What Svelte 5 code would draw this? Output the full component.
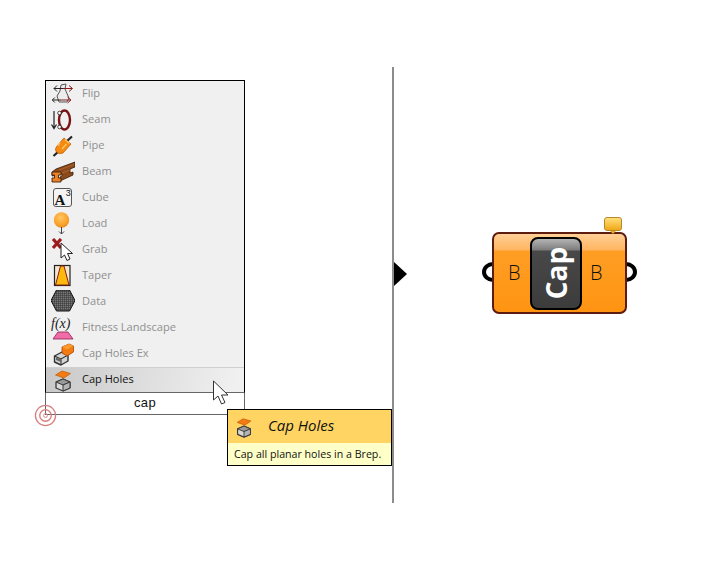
<script>
  const rows = ['Flip','Seam','Pipe','Beam','Cube','Load','Grab','Taper','Data','Fitness Landscape','Cap Holes Ex'];
</script>

{#snippet capIcon()}
  <svg class="ico" viewBox="0 0 24 24" aria-hidden="true">
    <path d="M5 14 L12 11 L19 14 V20 L12 23 L5 20 Z" fill="#d8d8d8" stroke="#3a3a3a" stroke-width="1.300" stroke-linejoin="round"/>
    <path d="M5 14 L12 11 L19 14 L12 17 Z" fill="#9a9a9a" stroke="#3a3a3a" stroke-width="1"/>
    <path d="M12 17 L19 14 V20 L12 23 Z" fill="#b4b4b4" stroke="#3a3a3a" stroke-width="1"/>
    <path d="M4.500 7 L11 3 L19.500 5.500 L13 10 Z" fill="#f47a12" stroke="#c2600c" stroke-width=".8" stroke-linejoin="round"/>
  </svg>
{/snippet}

{#snippet icon(name)}
  {#if name === 'Flip'}
    <svg class="ico" viewBox="0 0 24 24"><path d="M10 3 L15 2 L14 7 L18 16 L16 20 H8 L6 14 L9 9 Z" fill="#ececec" stroke="#555" stroke-width="1"/><path d="M3 6.500 H12" stroke="#222" stroke-width="1"/><path d="M12 6.500 H21" stroke="#8a1c1c" stroke-width="1"/><path d="M1.500 18 H10" stroke="#222" stroke-width="1"/><path d="M10 18 H19.500" stroke="#8a1c1c" stroke-width="1"/><path d="M6 3.500 L3 6.500 L6 9.500 M3.800 15.500 L1.300 18 L3.800 20.500" fill="none" stroke="#222" stroke-width="1"/><path d="M18 3.500 L21.500 6.500 L18 9.500 M16.500 15 L20 18 L16.500 21" fill="none" stroke="#8a1c1c" stroke-width="1"/></svg>
  {:else if name === 'Seam'}
    <svg class="ico" viewBox="0 0 24 24"><ellipse cx="13.500" cy="12" rx="5.500" ry="9.500" fill="none" stroke="#7a1414" stroke-width="2.400"/><path d="M3 3 V20 M.5 16.500 L3 20.500 L5.500 16.500" fill="none" stroke="#222" stroke-width="1.200"/><circle cx="8.500" cy="5" r="1.800" fill="#fff" stroke="#222" stroke-width=".8"/><circle cx="8.500" cy="19" r="1.800" fill="#fff" stroke="#222" stroke-width=".8"/></svg>
  {:else if name === 'Pipe'}
    <svg class="ico" viewBox="0 0 24 24"><path d="M21 2.500 L16 7 M8 17 L2.500 22" stroke="#222" stroke-width="2.200"/><path d="M13 4 L20 10 L12 19 Q8 21 5 17.500 Q3.500 15 6 12 Z" fill="#f58a12" stroke="#c06208" stroke-width=".8"/><path d="M14 5.500 L18.500 9.500 M7 12 L9 8.500 M11 15 L15.500 10" stroke="#ffc463" stroke-width="1.400"/></svg>
  {:else if name === 'Beam'}
    <svg class="ico" viewBox="0 0 24 24"><path d="M1 12 L5 9 L24 2 V7 L19 9 V13 L22 12 V15 L9 21 V17 L11 16 V14 L1 16 Z" fill="#8a4a1c" stroke="#3a1c08" stroke-width=".8"/><path d="M1 12 H10 V15 H7.500 V18 H10 V22 H1 V18 H3.500 V15 H1 Z" fill="#e8832a" stroke="#4a2208" stroke-width=".9"/><path d="M8 10 L23 4.500 M11 13 L20 9.500" stroke="#b86a2c" stroke-width=".8"/></svg>
  {:else if name === 'Cube'}
    <svg class="ico" viewBox="0 0 24 24"><rect x="2.500" y="2.500" width="18" height="18" rx="2.500" fill="#f3f3f3" stroke="#555" stroke-width="1"/><text x="3.500" y="18.500" class="cube-a">A</text><text x="14.800" y="10" class="cube-n">3</text></svg>
  {:else if name === 'Load'}
    <svg class="ico" viewBox="0 0 24 24"><defs><radialGradient id="lg" cx=".45" cy=".35" r=".8"><stop offset="0" stop-color="#ffc766"/><stop offset=".6" stop-color="#f9a128"/><stop offset="1" stop-color="#d87a0c"/></radialGradient></defs><circle cx="10.500" cy="8" r="7.700" fill="url(#lg)"/><path d="M10.500 15 V22 M8 19.500 L10.500 22 L13 19.500" fill="none" stroke="#444" stroke-width="1"/></svg>
  {:else if name === 'Grab'}
    <svg class="ico" viewBox="0 0 24 24"><path d="M2 1 L10 10 M10 1 L2 10" stroke="#9c1c1c" stroke-width="3.200"/><path d="M10 5 V20 L13.500 17 L16 22.500 L19 21 L16.500 15.500 L21.500 15.500 Z" fill="#fff" stroke="#222" stroke-width="1"/></svg>
  {:else if name === 'Taper'}
    <svg class="ico" viewBox="0 0 24 24"><rect x="3.500" y="1.500" width="15.500" height="20" fill="#f4e6d0" stroke="#222" stroke-width="1.200"/><path d="M9.500 2 H13 L18 21 H4.500 Z" fill="#fdb90e" stroke="#8a1c10" stroke-width="1"/></svg>
  {:else if name === 'Data'}
    <svg class="ico" viewBox="0 0 24 24"><defs><pattern id="dp" width="2" height="2" patternUnits="userSpaceOnUse"><rect width="2" height="2" fill="#555"/><rect width="1" height="1" fill="#777"/><rect x="1" y="1" width="1" height="1" fill="#444"/></pattern></defs><path d="M5.500 0 H18.500 L24 10.500 L18.500 21 H5.500 L0 10.500 Z" fill="url(#dp)" stroke="#111" stroke-width="1"/></svg>
  {:else if name === 'Fitness Landscape'}
    <svg class="ico" viewBox="0 0 24 24"><text x="0" y="12" class="fx">f(x)</text><path d="M7 16 H17 L22 23 H2 Z" fill="#f26ca7" stroke="#8a2050" stroke-width=".8"/></svg>
  {:else}
    <svg class="ico" viewBox="0 0 24 24"><path d="M3.500 14 L11 10 L17 13 V19 L10 23 L3.500 20 Z" fill="#d4d4d4" stroke="#333" stroke-width="1.400" stroke-linejoin="round"/><path d="M3.500 14 L10 17 L17 13 M10 17 V23" fill="none" stroke="#333" stroke-width="1.100"/><path d="M5 15.500 L10 17.500 L10 20 L5 18 Z" fill="#666"/><path d="M11 5 L18 2 L22.500 4 V10 L16 14 L11 11 Z" fill="#f47a12" stroke="#a8480a" stroke-width=".8"/><path d="M11 5 L16 7.500 L22.500 4 L18 2 Z" fill="#ff9a30"/></svg>
  {/if}
{/snippet}

<div class="stage">
  <div class="divider"></div>
  <div class="arrow"></div>

  <div class="panel">
    <ul class="list">
      {#each rows as r}
        <li class="row">{@render icon(r)}<span>{r}</span></li>
      {/each}
      <li class="row active">{@render capIcon()}<span>Cap Holes</span></li>
    </ul>
    <div class="search">cap</div>
  </div>

  <svg class="target" viewBox="0 0 24 24"><circle cx="12" cy="12" r="10.500" fill="none" stroke="#d98080" stroke-width="1.400"/><circle cx="12" cy="12" r="6" fill="none" stroke="#d98080" stroke-width="1.400"/><circle cx="12" cy="12" r="2" fill="none" stroke="#d98080" stroke-width="1"/></svg>

  <svg class="cursor" viewBox="0 0 20 26"><path d="M1.500 1 V20 L6 16 L9.500 24 L13 22.500 L9.500 15 L16 15 Z" fill="#fff" stroke="#333" stroke-width="1"/></svg>

  <div class="tip">
    <div class="tip-head">{@render capIcon()}<em>Cap Holes</em></div>
    <div class="tip-body">Cap all planar holes in a Brep.</div>
  </div>

  <div class="comp">
    <div class="wire left"></div>
    <div class="wire right"></div>
    <div class="body">
      <span class="port">B</span>
      <div class="nick"><span>Cap</span></div>
      <span class="port">B</span>
    </div>
    <div class="bubble"></div>
  </div>
</div>

<style>
  :global(body) { background: #fff; }
  .stage { position: relative; width: 712px; height: 564px; overflow: hidden; font-family: "Liberation Sans", Arial, sans-serif; }
  .divider { position: absolute; left: 392px; top: 67px; width: 2px; height: 436px; background: #8c8c8c; }
  .arrow { position: absolute; left: 394px; top: 262px; width: 0; height: 0; border-top: 12.500px solid transparent; border-bottom: 12.500px solid transparent; border-left: 13px solid #000; }

  .panel { position: absolute; left: 45px; top: 80px; width: 200px; box-sizing: border-box; }
  .list { list-style: none; margin: 0; padding: 0; border: 1px solid #000; border-bottom: 1px solid #666; background: #f0f0f0; }
  .row { display: flex; align-items: center; gap: 7px; height: 26px; padding-left: 5px; font-family: "Open Sans", "Liberation Sans", sans-serif; font-size: 11.050px; color: #8f8f8f; }
  .row span { line-height: 1; position: relative; top: -1px; }
  .active { color: #111; height: 25px; box-sizing: border-box; background: linear-gradient(100deg, #c8c8c8, #dedede 50%, #f0f0f0 95%); border-top: 1px solid #cfcfcf; }
  .ico { width: 24px; height: 24px; flex: none; }
  .cube-a { font: 700 15px "Liberation Serif", serif; fill: #111; }
  .cube-n { font: 400 9px "Liberation Sans", sans-serif; fill: #111; }
  .fx { font: italic 400 14px "Liberation Serif", serif; fill: #222; }
  .search { height: 21px; background: #fff; border: 1px solid #666; border-top: 0; text-align: center; font-size: 13px; line-height: 20px; color: #111; letter-spacing: .3px; }

  .target { position: absolute; left: 34px; top: 404px; width: 23px; height: 23px; }
  .cursor { position: absolute; left: 212px; top: 380px; width: 20px; height: 26px; }

  .tip { position: absolute; left: 227px; top: 409px; width: 165px; box-sizing: border-box; border: 1px solid #000; font-family: "Open Sans", "Liberation Sans", sans-serif; }
  .tip-head { height: 33px; display: flex; align-items: center; gap: 13px; padding-left: 5px; background: #ffd463; }
  .tip-head em { font-size: 15px; color: #111; position: relative; top: -2px; }
  .tip-head .ico { width: 22px; height: 22px; }
  .tip-body { height: 22px; padding-left: 6px; background: #ffffc8; font: 10.650px/22px "Open Sans", "Liberation Sans", sans-serif; color: #111; white-space: nowrap; }

  .comp { position: absolute; left: 482px; top: 216px; width: 156px; height: 100px; }
  .wire { position: absolute; top: 46px; width: 22px; height: 20px; border: 4px solid #000; border-radius: 50%; box-sizing: border-box; }
  .wire.left { left: 0; }
  .wire.right { left: 133px; }
  .bubble { position: absolute; left: 122px; top: 1px; width: 18px; height: 14px; border-radius: 3px; background: linear-gradient(#ffdf7a, #f0a818); border: 1px solid #b8892a; box-sizing: border-box; }
  .bubble::after { content: ""; position: absolute; left: 5px; bottom: -4px; border-left: 3px solid transparent; border-right: 3px solid transparent; border-top: 3px solid #e8a820; }
  .body { position: absolute; left: 10px; top: 16px; width: 135px; height: 82px; box-sizing: border-box; border: 2px solid #5c1c10; border-radius: 7px; background: linear-gradient(#ffcf96 0, #ffb560 16px, #ff9e24 17px, #ff9412 100%); display: flex; align-items: center; padding-left: 14px; }
  .port { font: 300 20px "Open Sans", "Liberation Sans", sans-serif; color: #111; width: 12px; position: relative; top: -1px; }
  .nick { width: 52px; height: 73px; margin: 0 8px 0 10px; box-sizing: border-box; border: 2px solid #000; border-radius: 8px; background: linear-gradient(#b4b4b4 0, #7c7c7c 11px, #484848 12px, #3c3c3c 100%); display: flex; align-items: center; justify-content: center; }
  .nick span { display: block; transform: rotate(-90deg); color: #fff; font: 700 28px "Open Sans", "Liberation Sans", sans-serif; line-height: 1; }
</style>
